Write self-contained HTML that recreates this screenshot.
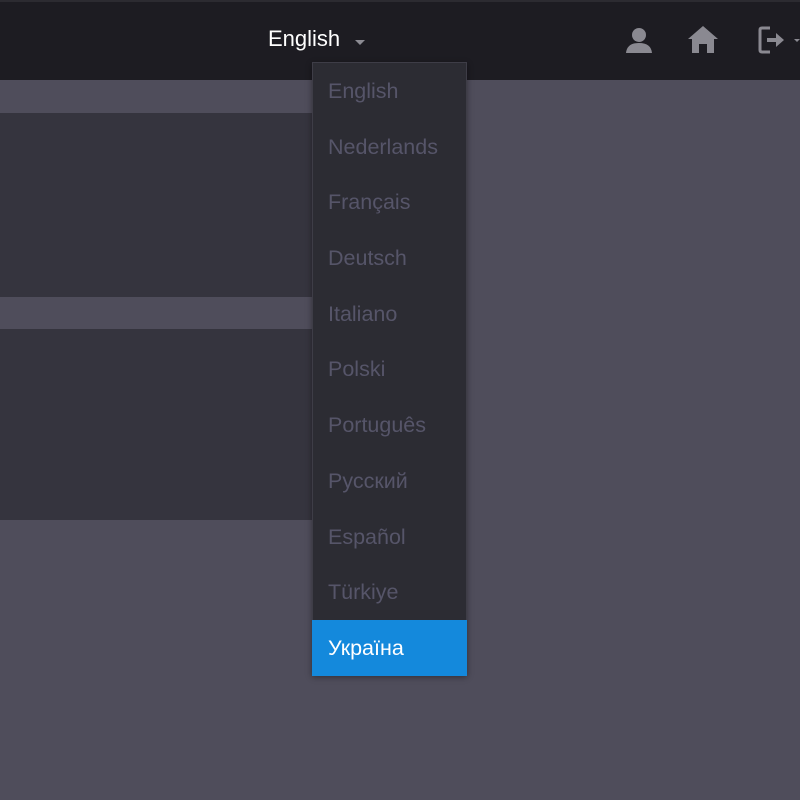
<!DOCTYPE html>
<html><head><meta charset="utf-8"><style>
*{margin:0;padding:0;box-sizing:border-box}
body{width:800px;height:800px;background:#4f4d5b;position:relative;overflow:hidden;font-family:"Liberation Sans",sans-serif}
.hdr{position:absolute;left:0;top:0;width:800px;height:80px;background:#1d1c22;border-top:2px solid #2c2b31}
.lang{position:absolute;left:268px;top:24px;color:#fff;font-size:22px}
.caret{position:absolute;left:355px;top:38px;width:0;height:0;border-left:5px solid transparent;border-right:5px solid transparent;border-top:5px solid #8c8b93}
.p{position:absolute;left:0;width:312px;background:#35343e}
.dd{position:absolute;left:312px;top:62px;width:155px;height:613px;background:#2c2c33;border:1px solid #3e3d47;box-shadow:0 2px 6px rgba(0,0,0,.4)}
.it{height:55.7px;line-height:57px;padding-left:15px;color:#565569;font-size:21.5px}
.sel{background:#1489dc;color:#fff;margin:0 -1px;padding-left:16px}
svg{position:absolute}
</style></head><body>
<div class="hdr">
<div class="lang">English</div><div class="caret"></div>
<svg style="left:624px;top:25px" width="30" height="27" viewBox="0 0 30 27"><circle cx="15" cy="8" r="7" fill="#8a8991"/><path d="M2 26 Q3 16 15 16 Q27 16 28 26 Z" fill="#8a8991"/></svg>
<svg style="left:687px;top:22px" width="32" height="30" viewBox="0 0 32 30"><path d="M16 2 L31 15 L27 15 L27 29 L20 29 L20 20 L12 20 L12 29 L5 29 L5 15 L1 15 Z" fill="#8a8991"/></svg>
<svg style="left:758px;top:24px" width="42" height="30" viewBox="0 0 42 30"><path d="M12 2 H4 Q2 2 2 4 V24 Q2 26 4 26 H12" fill="none" stroke="#8a8991" stroke-width="3"/><path d="M9 12 H18 V7 L26 14 L18 21 V16 H9 Z" fill="#8a8991"/><path d="M36 13 L42 13 L39 16 Z" fill="#8a8991"/></svg>
</div>
<div class="p" style="top:113px;height:184px"></div>
<div class="p" style="top:329px;height:191px"></div>
<div class="dd">
<div class="it">English</div><div class="it">Nederlands</div><div class="it">Français</div><div class="it">Deutsch</div><div class="it">Italiano</div><div class="it">Polski</div><div class="it">Português</div><div class="it">Русский</div><div class="it">Español</div><div class="it">Türkiye</div><div class="it sel">Україна</div>
</div>
</body></html>
